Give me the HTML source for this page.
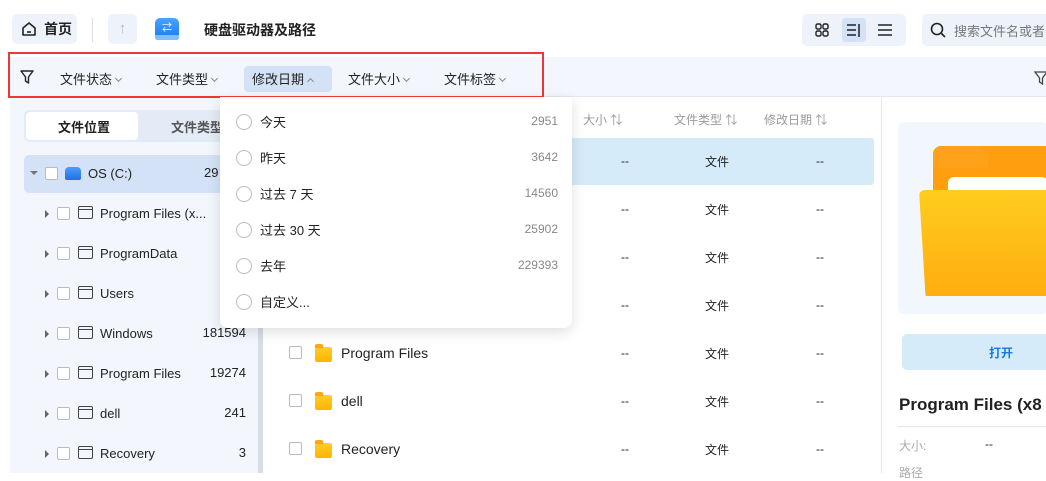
<!DOCTYPE html>
<html><head><meta charset="utf-8"><style>
*{box-sizing:border-box;margin:0;padding:0}
body{width:1046px;height:473px;overflow:hidden;background:#fff;font-family:"Liberation Sans","Noto Sans CJK SC",sans-serif;font-size:13px;color:#222;position:relative}
.a{position:absolute}
.cb{position:absolute;width:13px;height:13px;border:1px solid #bbb;border-radius:2px;background:#fff}
.tri{position:absolute;width:0;height:0;border-top:4px solid transparent;border-bottom:4px solid transparent;border-left:4px solid #666}
.fo{position:absolute;width:15px;height:13px;border:1.3px solid #444;border-radius:2px}
.fo:before{content:"";position:absolute;left:-1px;top:2px;width:14px;border-top:1.3px solid #444}
.yf{position:absolute;width:17px;height:15px;background:linear-gradient(#ffcf2a,#ffb300);border-radius:2px}
.yf:before{content:"";position:absolute;left:0;top:-3px;width:8px;height:4px;background:#ffa614;border-radius:2px 2px 0 0}
.rad{position:absolute;width:16px;height:16px;border:1px solid #bbb;border-radius:50%}
.chev{display:inline-block;width:5px;height:5px;border-right:1.2px solid #888;border-bottom:1.2px solid #888;transform:rotate(45deg);margin-left:4px;position:relative;top:-3px}
.up{transform:rotate(-135deg);top:0}
</style></head><body>
<!-- top bar -->
<div class="a" style="left:12px;top:14px;width:65px;height:30px;background:#eef3fb;border-radius:5px"></div>
<svg class="a" style="left:21px;top:21px" width="16" height="16" viewBox="0 0 16 16"><path d="M2 7 L8 2 L14 7 V14 H2 Z" fill="none" stroke="#222" stroke-width="1.6" stroke-linejoin="round"/><path d="M6 11h4" stroke="#222" stroke-width="1.6"/></svg>
<div class="a" style="left:44px;top:19px;font-size:14px;font-weight:bold">首页</div>
<div class="a" style="left:92px;top:18px;width:1px;height:24px;background:#ddd"></div>
<div class="a" style="left:108px;top:14px;width:29px;height:30px;background:#eef3fb;border-radius:5px;color:#bbb;font-size:15px;text-align:center;line-height:30px">↑</div>
<div class="a" style="left:155px;top:18px;width:24px;height:22px;background:linear-gradient(#4aa3ff,#1a78f0);border-radius:5px 5px 3px 3px"></div>
<div class="a" style="left:155px;top:35px;width:24px;height:5px;background:#7cc0ff;border-radius:0 0 3px 3px"></div>
<div class="a" style="left:162px;top:19px;color:#fff;font-size:10px">⇄</div>
<div class="a" style="left:204px;top:20px;font-size:14px;font-weight:bold">硬盘驱动器及路径</div>
<div class="a" style="left:802px;top:14px;width:104px;height:32px;background:#eef3fb;border-radius:5px"></div>
<div class="a" style="left:842px;top:18px;width:24px;height:24px;background:#d4e2f7;border-radius:4px"></div>
<svg class="a" style="left:815px;top:23px" width="14" height="14"><rect x="1" y="1" width="5" height="5" rx="1.5" fill="none" stroke="#222" stroke-width="1.4"/><rect x="8" y="1" width="5" height="5" rx="1.5" fill="none" stroke="#222" stroke-width="1.4"/><rect x="1" y="8" width="5" height="5" rx="1.5" fill="none" stroke="#222" stroke-width="1.4"/><rect x="8" y="8" width="5" height="5" rx="1.5" fill="none" stroke="#222" stroke-width="1.4"/></svg>
<svg class="a" style="left:847px;top:24px" width="14" height="13"><path d="M0 1h9M0 6h9M0 11h9M12 0v13" stroke="#222" stroke-width="1.5"/></svg>
<svg class="a" style="left:878px;top:24px" width="14" height="13"><path d="M0 1h14M0 6h14M0 11h14" stroke="#222" stroke-width="1.5"/></svg>
<div class="a" style="left:922px;top:14px;width:130px;height:32px;background:#eef3fb;border-radius:5px"></div>
<svg class="a" style="left:930px;top:22px" width="16" height="16"><circle cx="7" cy="7" r="5.5" fill="none" stroke="#222" stroke-width="1.6"/><path d="M11 11l4 4" stroke="#222" stroke-width="1.6"/></svg>
<div class="a" style="left:954px;top:21px;color:#777;font-size:13px;white-space:nowrap">搜索文件名或者</div>
<!-- filter bar -->
<div class="a" style="left:10px;top:57px;width:1036px;height:40px;background:#f3f7fd;border-bottom:1px solid #e4e8ee"></div>
<div class="a" style="left:8px;top:52px;width:536px;height:46px;border:2px solid #f0353a"></div>
<svg class="a" style="left:20px;top:70px" width="14" height="14"><path d="M1 1h12L8.5 7v6L5.5 11V7Z" fill="none" stroke="#222" stroke-width="1.4" stroke-linejoin="round"/></svg>
<div class="a" style="left:244px;top:66px;width:88px;height:26px;background:#d4e2f7;border-radius:4px"></div>
<div class="a" style="left:60px;top:69px">文件状态<span class="chev"></span></div>
<div class="a" style="left:156px;top:69px">文件类型<span class="chev"></span></div>
<div class="a" style="left:252px;top:69px">修改日期<span class="chev up"></span></div>
<div class="a" style="left:348px;top:69px">文件大小<span class="chev"></span></div>
<div class="a" style="left:444px;top:69px">文件标签<span class="chev"></span></div>
<svg class="a" style="left:1034px;top:71px" width="14" height="14"><path d="M1 1h12L8.5 7v6L5.5 11V7Z" fill="none" stroke="#444" stroke-width="1.3"/></svg>
<!-- left panel -->
<div class="a" style="left:10px;top:98px;width:248px;height:375px;background:#f3f7fd"></div>
<div class="a" style="left:258px;top:98px;width:5px;height:375px;background:#d8dce4"></div>
<div class="a" style="left:24px;top:110px;width:234px;height:32px;background:#e3ebf6;border-radius:5px"></div>
<div class="a" style="left:26px;top:112px;width:112px;height:28px;background:#fff;border-radius:4px"></div>
<div class="a" style="left:58px;top:117px;font-weight:bold">文件位置</div>
<div class="a" style="left:171px;top:117px;font-weight:bold;color:#555">文件类型</div>
<div class="a" style="left:24px;top:155px;width:234px;height:38px;background:#d4e2f7;border-radius:5px"></div>
<div class="a" style="left:30px;top:171px;border-left:4px solid transparent;border-right:4px solid transparent;border-top:4px solid #777"></div>
<div class="cb" style="left:45px;top:167px"></div>
<div class="a" style="left:65px;top:167px;width:16px;height:13px;background:linear-gradient(#4a9bff,#2370e0);border-radius:4px 4px 2px 2px"></div>
<div class="a" style="left:88px;top:166px">OS (C:)</div>
<div class="a" style="left:204px;top:165px">29</div>
<div id="tree"></div>
<!-- main list -->
<div class="a" style="left:268px;top:98px;width:614px;height:375px;background:#fff"></div>
<div class="a" style="left:583px;top:111px;color:#999;font-size:12px">大小 ⇅</div>
<div class="a" style="left:674px;top:111px;color:#999;font-size:12px">文件类型 ⇅</div>
<div class="a" style="left:764px;top:111px;color:#999;font-size:12px">修改日期 ⇅</div>
<div class="a" style="left:268px;top:138px;width:606px;height:47px;background:#d6ebfa;border-radius:3px"></div>
<div class="a" style="left:881px;top:98px;width:1px;height:375px;background:#e4e8ee"></div>
<!-- right panel -->
<div class="a" style="left:898px;top:122px;width:150px;height:192px;background:#f2f7fd;border-radius:6px"></div>
<div class="a" style="left:933px;top:146px;width:120px;height:60px;background:#ff9f10;border-radius:8px"></div>
<div class="a" style="left:933px;top:146px;width:55px;height:22px;background:#ffa21a;border-radius:8px 12px 0 0"></div>
<div class="a" style="left:948px;top:177px;width:100px;height:30px;background:#fff;border-radius:6px"></div>
<div class="a" style="left:919px;top:190px;width:130px;height:106px;background:linear-gradient(#ffcd1e,#ffad10);border-radius:6px 0 0 8px;clip-path:polygon(0 0,100% 0,100% 100%,5% 100%)"></div>
<div class="a" style="left:902px;top:334px;width:150px;height:36px;background:#d6ebfa;border-radius:5px"></div>
<div class="a" style="left:989px;top:344px;color:#1677e8;font-weight:bold;font-size:12px">打开</div>
<div class="a" style="left:899px;top:395px;font-size:17px;font-weight:bold;white-space:nowrap">Program Files (x8</div>
<div class="a" style="left:898px;top:426px;width:150px;height:1px;background:#e4e8ee"></div>
<div class="a" style="left:899px;top:437px;color:#aaa;font-size:12px">大小:</div>
<div class="a" style="left:985px;top:437px;font-size:12px">--</div>
<div class="a" style="left:899px;top:464px;color:#aaa;font-size:12px">路径</div>
<div id="rows"></div>
<!-- dropdown -->
<div class="a" style="left:220px;top:97px;width:352px;height:231px;background:#fff;border-radius:0 0 8px 8px;box-shadow:0 4px 14px rgba(0,0,0,.13)"></div>
<div id="dd"></div>
<script>
var t=[["Program Files (x...","1"],["ProgramData",""],["Users","7"],["Windows","181594"],["Program Files","19274"],["dell","241"],["Recovery","3"]],h="";
t.forEach(function(r,i){var y=214+i*40;h+='<div class="tri" style="left:45px;top:'+(y-4)+'px"></div><div class="cb" style="left:57px;top:'+(y-7)+'px"></div><div class="fo" style="left:78px;top:'+(y-8)+'px"></div><div class="a" style="left:100px;top:'+(y-8)+'px">'+r[0]+'</div><div class="a" style="right:'+(1046-246)+'px;top:'+(y-9)+'px">'+r[1]+'</div>';});
document.getElementById('tree').outerHTML=h;
h="";["","","","","Program Files","dell","Recovery"].forEach(function(n,i){var y=162+i*48;if(i>=4)h+='<div class="cb" style="left:289px;top:'+(y-8)+'px"></div><div class="yf" style="left:315px;top:'+(y-7)+'px"></div><div class="a" style="left:341px;top:'+(y-9)+'px;font-size:14px">'+n+'</div>';h+='<div class="a" style="left:621px;top:'+(y-8)+'px;font-size:12px">--</div><div class="a" style="left:705px;top:'+(y-9)+'px;font-size:12px">文件</div><div class="a" style="left:816px;top:'+(y-8)+'px;font-size:12px">--</div>';});
document.getElementById('rows').outerHTML=h;
h="";[["今天","2951"],["昨天","3642"],["过去 7 天","14560"],["过去 30 天","25902"],["去年","229393"],["自定义...",""]].forEach(function(r,i){var y=122+i*36;h+='<div class="rad" style="left:236px;top:'+(y-8)+'px"></div><div class="a" style="left:260px;top:'+(y-10)+'px">'+r[0]+'</div><div class="a" style="right:488px;top:'+(y-8)+'px;color:#888;font-size:12px">'+r[1]+'</div>';});
document.getElementById('dd').outerHTML=h;
</script>
</body></html>
